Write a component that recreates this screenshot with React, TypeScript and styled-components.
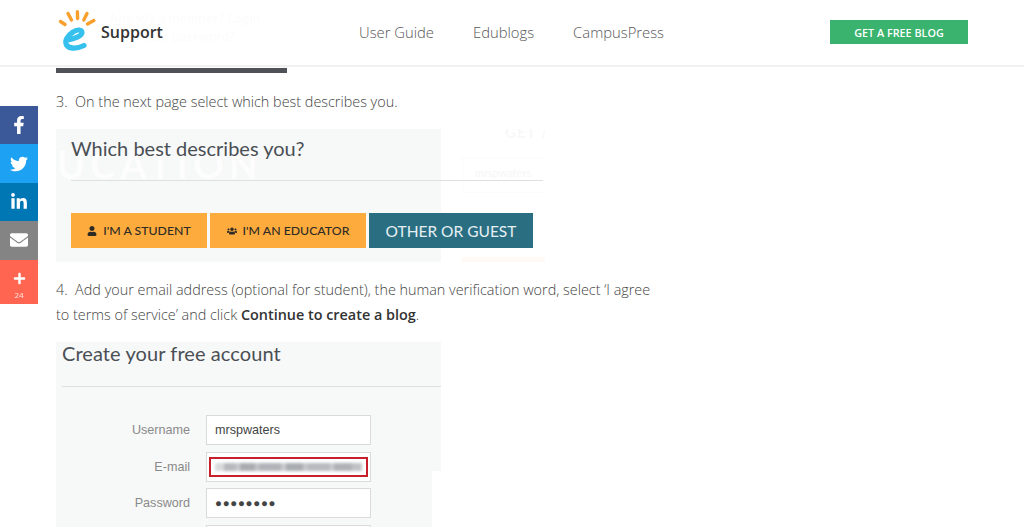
import React from 'react';
import styled, { createGlobalStyle } from 'styled-components';
import { FaFacebookF, FaTwitter, FaLinkedinIn, FaEnvelope, FaPlus, FaUser, FaUsers } from 'react-icons/fa';

const GlobalStyle = createGlobalStyle`
  html, body {
    margin: 0;
    padding: 0;
    background: #fff;
    overflow: hidden;
  }
  body {
    font-family: "Open Sans", sans-serif;
    color: #555;
  }
`;

const Page = styled.div`
  position: relative;
  width: 1024px;
  height: 527px;
  overflow: hidden;
`;

const Header = styled.header`
  position: absolute;
  inset: 0 0 auto 0;
  height: 65px;
  display: flex;
  align-items: center;
  padding: 0 56px 0 58px;
  background: rgba(255, 255, 255, 0.96);
  border-bottom: 2px solid #f1f1f2;
`;

const Brand = styled.div`
  display: flex;
  align-items: flex-end;
  width: 301px;
  height: 42px;
  margin-top: -4px;
`;

const BrandName = styled.span`
  font-size: 16px;
  font-weight: 600;
  color: #333;
  margin: 0 0 10px 5px;
  line-height: 20px;
`;

const Nav = styled.nav`
  display: flex;
  gap: 39px;
  flex: 1;
  margin-top: -1px;
`;

const NavLink = styled.a`
  font-size: 14.8px;
  font-weight: 300;
  color: #555;
`;

const CtaButton = styled.a`
  width: 138px;
  height: 24px;
  margin-top: -1px;
  display: flex;
  align-items: center;
  justify-content: center;
  background: #39b36d;
  color: #fff;
  font-size: 10.8px;
  font-weight: 600;
`;

const ShareBar = styled.aside`
  position: absolute;
  left: 0;
  top: 106px;
  width: 38px;
  display: flex;
  flex-direction: column;
`;

const ShareItem = styled.a<{ $bg: string }>`
  height: 38.4px;
  background: ${(p) => p.$bg};
  color: #fff;
  display: flex;
  flex-direction: column;
  align-items: center;
  justify-content: center;
  font-size: 18px;
`;

const ShareMore = styled(ShareItem)`
  height: 44.5px;
  font-size: 13px;
  padding-top: 9px;
  box-sizing: border-box;
`;

const ShareCount = styled.span`
  font-size: 8px;
  line-height: 10px;
  margin-top: 5px;
  opacity: 0.85;
`;

const Article = styled.main`
  width: 620px;
  padding-left: 56px;
  display: flex;
  flex-direction: column;
  align-items: flex-start;
`;

const SignupShot = styled.div`
  width: 231px;
  height: 73px;
  box-sizing: border-box;
  background: #fff;
  border-bottom: 5px solid #4f5357;
  display: flex;
`;

const SignupPanel = styled.div`
  flex: 1;
  box-sizing: border-box;
  border: 4px solid #f7f7f7;
  border-width: 0 4px;
  display: flex;
  flex-direction: column;
  padding: 9px 0 0 49px;
  font-family: "Lato", sans-serif;
  font-size: 13.5px;
  font-weight: 700;
  line-height: 18px;
  color: #aaa;
`;

const ForgotLine = styled.span`
  padding-left: 20px;
`;

const Step = styled.p`
  margin: 0;
  font-size: 14.4px;
  line-height: 25px;
  font-weight: 300;
  color: #444;
`;

const StepThree = styled(Step)`
  margin: 16px 0 15px;
`;

const StepFour = styled(Step)`
  margin: 15px 0 15px;
  width: 605px;
`;

const Strong = styled.strong`
  font-weight: 600;
  color: #333;
`;

const DescribeShot = styled.div`
  position: relative;
  isolation: isolate;
  width: 489px;
  height: 133px;
  overflow: hidden;
  background: linear-gradient(to right, #f7f8f8 0, #f7f8f8 385px, #fff 385px);
  display: flex;
  flex-direction: column;
  padding-left: 15px;
  box-sizing: border-box;
`;

const GhostWord = styled.span`
  position: absolute;
  z-index: -1;
  left: 1px;
  top: 12px;
  font-family: "Lato", sans-serif;
  font-size: 38px;
  font-weight: 700;
  letter-spacing: 5px;
  white-space: nowrap;
  color: #fdfdfd;
`;

const GhostGet = styled.span`
  position: absolute;
  z-index: -1;
  left: 449px;
  top: -6px;
  font-family: "Lato", sans-serif;
  font-size: 15px;
  font-weight: 700;
  letter-spacing: 1px;
  white-space: nowrap;
  color: #f8f8f8;
`;

const GhostInput = styled.div`
  position: absolute;
  z-index: -1;
  left: 406px;
  top: 28px;
  width: 100px;
  height: 36px;
  box-sizing: border-box;
  border: 1px solid #fbfbfb;
  padding: 8px 12px;
  font-family: "Lato", sans-serif;
  font-size: 11px;
  color: #f6f6f6;
`;

const GhostBand = styled.div`
  position: absolute;
  z-index: -1;
  left: 406px;
  top: 128px;
  width: 100px;
  height: 10px;
  background: #fffaf5;
`;

const ShotTitle = styled.div`
  font-family: "Lato", sans-serif;
  font-size: 20px;
  line-height: 26px;
  color: #4a4f55;
`;

const DescribeTitle = styled(ShotTitle)`
  padding: 6px 0 19px;
  border-bottom: 1px solid #dfe0e0;
  margin-right: 2px;
`;

const RoleRow = styled.div`
  display: flex;
  gap: 3px;
  margin-top: 32px;
`;

const RoleButton = styled.div<{ $w: number; $teal?: boolean }>`
  width: ${(p) => p.$w}px;
  height: 35px;
  box-sizing: border-box;
  display: flex;
  align-items: center;
  justify-content: center;
  gap: 6px;
  background: ${(p) => (p.$teal ? '#2a6e82' : '#fdab3d')};
  color: ${(p) => (p.$teal ? '#e6f0f3' : '#2e2b26')};
  font-family: "Lato", sans-serif;
  font-size: ${(p) => (p.$teal ? 15.5 : 12.3)}px;
  font-weight: ${(p) => (p.$teal ? 400 : 500)};
  svg {
    font-size: 10px;
  }
`;

const AccountShot = styled.div`
  position: relative;
  width: 385px;
  height: 185px;
  background: #f7f8f8;
  font-family: "Liberation Sans", sans-serif;
  display: flex;
  flex-direction: column;
  padding-left: 6px;
  box-sizing: border-box;
  overflow: hidden;
  &::after {
    content: '';
    position: absolute;
    left: 376px;
    top: 129px;
    right: 0;
    bottom: 0;
    background: #fff;
  }
`;

const AccountTitle = styled(ShotTitle)`
  padding: 0 0 20px;
  margin-right: -6px;
  border-bottom: 1px solid #dfe0e0;
  margin-bottom: 28px;
  margin-top: -2px;
  letter-spacing: 0.08px;
`;

const FieldRow = styled.div`
  display: flex;
  align-items: center;
  gap: 16px;
  margin-bottom: 6.5px;
`;

const FieldLabel = styled.span`
  width: 128px;
  text-align: right;
  font-size: 12.6px;
  color: #8a8a8a;
`;

const FieldBox = styled.div`
  width: 165px;
  height: 30px;
  box-sizing: border-box;
  border: 1px solid #dadada;
  background: #fff;
  display: flex;
  align-items: center;
  padding: 0 8px;
  font-size: 12.6px;
  color: #444;
`;

const EmailHighlight = styled.div`
  flex: 1;
  height: 20px;
  margin: 0 -6px;
  border: 2px solid #c8202a;
  box-sizing: border-box;
  display: flex;
  align-items: center;
  padding: 0 4px;
`;

const Blur = styled.div`
  width: 100%;
  height: 8px;
  background: linear-gradient(
    to right,
    #d8dadc 0 6%, #b5b8bc 6% 14%, #c8cbce 14% 17%, #a8acb0 17% 27%, #c2c5c8 27% 30%,
    #b0b4b8 30% 45%, #c8cbce 45% 48%, #a9adb1 48% 60%, #c4c7ca 60% 63%, #b7babe 63% 78%,
    #c8cbce 78% 81%, #aeb2b6 81% 93%, #c0c3c6 93% 100%
  );
  filter: blur(1.8px);
`;

const Dots = styled.span`
  font-size: 11.5px;
  letter-spacing: 0.7px;
  color: #444;
`;

const Logo = () => (
  <svg width="38" height="42" viewBox="0 0 38 42">
    <g stroke="#f9a02c" strokeWidth="3.4" strokeLinecap="round">
      <line x1="2.5" y1="11.5" x2="7" y2="14.5" />
      <line x1="10" y1="3.5" x2="13.5" y2="10" />
      <line x1="19.4" y1="1.8" x2="19.6" y2="8.5" />
      <line x1="29" y1="3.5" x2="25.8" y2="10" />
      <line x1="35.8" y1="10.5" x2="29.5" y2="14" />
    </g>
    <path
      d="M10 30 C16 29 24 26 24 22.5 C24 19.5 19 19 15 22 C9 26 6.5 31 8.5 35 C11 39 19 39 26 35.5"
      fill="none"
      stroke="#35c0ee"
      strokeWidth="5.2"
      strokeLinecap="round"
    />
  </svg>
);

const App = () => (
  <Page>
    <GlobalStyle />
    <Article>
      <SignupShot>
        <SignupPanel>
          <span>Already a member? Login</span>
          <ForgotLine>Forgot password?</ForgotLine>
        </SignupPanel>
      </SignupShot>
      <StepThree>3.&nbsp; On the next page select which best describes you.</StepThree>
      <DescribeShot>
        <GhostWord>UCATION</GhostWord>
        <GhostGet>GET /</GhostGet>
        <GhostInput>mrspwaters</GhostInput>
        <GhostBand />
        <DescribeTitle>Which best describes you?</DescribeTitle>
        <RoleRow>
          <RoleButton $w={136}>
            <FaUser />
            I'M A STUDENT
          </RoleButton>
          <RoleButton $w={156}>
            <FaUsers />
            I'M AN EDUCATOR
          </RoleButton>
          <RoleButton $w={164} $teal>
            OTHER OR GUEST
          </RoleButton>
        </RoleRow>
      </DescribeShot>
      <StepFour>
        4.&nbsp; Add your email address (optional for student), the human verification word, select ‘I agree to terms of service’ and click <Strong>Continue to create a blog</Strong>.
      </StepFour>
      <AccountShot>
        <AccountTitle>Create your free account</AccountTitle>
        <FieldRow>
          <FieldLabel>Username</FieldLabel>
          <FieldBox>mrspwaters</FieldBox>
        </FieldRow>
        <FieldRow>
          <FieldLabel>E-mail</FieldLabel>
          <FieldBox>
            <EmailHighlight>
              <Blur />
            </EmailHighlight>
          </FieldBox>
        </FieldRow>
        <FieldRow>
          <FieldLabel>Password</FieldLabel>
          <FieldBox>
            <Dots>●●●●●●●●</Dots>
          </FieldBox>
        </FieldRow>
        <FieldRow>
          <FieldLabel />
          <FieldBox />
        </FieldRow>
      </AccountShot>
    </Article>
    <Header>
      <Brand>
        <Logo />
        <BrandName>Support</BrandName>
      </Brand>
      <Nav>
        <NavLink>User Guide</NavLink>
        <NavLink>Edublogs</NavLink>
        <NavLink>CampusPress</NavLink>
      </Nav>
      <CtaButton>GET A FREE BLOG</CtaButton>
    </Header>
    <ShareBar>
      <ShareItem $bg="#3b5998"><FaFacebookF /></ShareItem>
      <ShareItem $bg="#1da1f2"><FaTwitter /></ShareItem>
      <ShareItem $bg="#0077b5"><FaLinkedinIn /></ShareItem>
      <ShareItem $bg="#848484"><FaEnvelope /></ShareItem>
      <ShareMore $bg="#ff6550">
        <FaPlus />
        <ShareCount>24</ShareCount>
      </ShareMore>
    </ShareBar>
  </Page>
);

export default App;
